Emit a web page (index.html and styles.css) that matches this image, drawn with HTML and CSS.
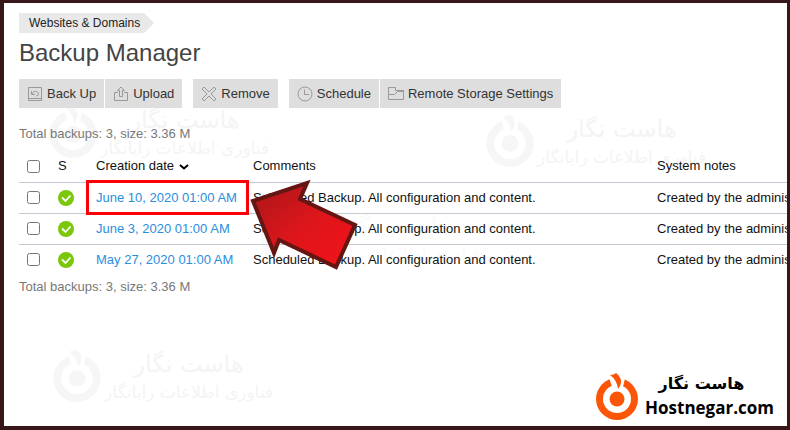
FILE: index.html
```html
<!DOCTYPE html>
<html lang="en">
  <head>
    <meta charset="UTF-8" />
    <title>Backup Manager</title>
    <link rel="stylesheet" href="styles.css">
  </head>
  <body>
    <!-- Shared shapes -->
    <svg class="sprite" aria-hidden="true">
      <symbol id="brand" viewBox="0 0 44 48">
        <circle cx="22" cy="27" r="21"></circle>
        <circle class="hole" cx="22" cy="27" r="14"></circle>
        <path class="hole" d="M13 2L17 15L22 21L28 15L31 2Z"></path>
        <circle cx="22" cy="27" r="7.500"></circle>
        <path d="M15 3Q19 3 21 1Q30 8 23 17Q22 8 15 3Z"></path>
      </symbol>
      <symbol id="ok" viewBox="0 0 16 16">
        <circle cx="8" cy="8" r="8" fill="#7bc70a"></circle>
        <path d="M4 7.500L7.500 11L12.500 5.500" fill="none" stroke="#fff" stroke-width="1.800"></path>
      </symbol>
    </svg>

    <div class="frame">
      <div class="watermark watermark-top-left" aria-hidden="true">
        <svg class="brand-icon"><use href="#brand"></use></svg>
        <div class="watermark-text" dir="rtl" lang="fa">
          <span class="watermark-name">هاست نگار</span>
          <span class="watermark-tagline">فناوری اطلاعات رایانگار</span>
        </div>
      </div>
      <div class="watermark watermark-top-right" aria-hidden="true">
        <svg class="brand-icon"><use href="#brand"></use></svg>
        <div class="watermark-text" dir="rtl" lang="fa">
          <span class="watermark-name">هاست نگار</span>
          <span class="watermark-tagline">فناوری اطلاعات رایانگار</span>
        </div>
      </div>
      <div class="watermark watermark-middle" aria-hidden="true">
        <svg class="brand-icon"><use href="#brand"></use></svg>
        <div class="watermark-text" dir="rtl" lang="fa">
          <span class="watermark-name">هاست نگار</span>
          <span class="watermark-tagline">فناوری اطلاعات رایانگار</span>
        </div>
      </div>
      <div class="watermark watermark-bottom" aria-hidden="true">
        <svg class="brand-icon"><use href="#brand"></use></svg>
        <div class="watermark-text" dir="rtl" lang="fa">
          <span class="watermark-name">هاست نگار</span>
          <span class="watermark-tagline">فناوری اطلاعات رایانگار</span>
        </div>
      </div>

      <main class="content">
        <nav><a class="breadcrumb" href="#">Websites &amp; Domains</a></nav>
        <h1>Backup Manager</h1>

        <div class="toolbar">
          <div class="button-group">
            <button type="button">
              <svg viewBox="0 0 16 16"><path d="M1.500 1.500h13v13h-13zM1 12.500h14M4.500 5v3.500H8M5 8C6.500 4 11.500 5 11.500 8Q11.500 10 9 10"></path></svg>
              Back Up
            </button>
            <button type="button">
              <svg viewBox="0 0 16 16"><path d="M5 6.500H1.500v8h13v-8H11M6.500 10.500V4.500h-2L8 1l3.500 3.500h-2v6z"></path></svg>
              Upload
            </button>
          </div>
          <div class="button-group">
            <button type="button">
              <svg viewBox="0 0 16 16"><path d="M1 3L3 1L8 6L13 1L15 3L10 8L15 13L13 15L8 10L3 15L1 13L6 8Z"></path></svg>
              Remove
            </button>
          </div>
          <div class="button-group">
            <button type="button">
              <svg viewBox="0 0 16 16"><circle cx="8" cy="8" r="7"></circle><path d="M7.500 3.500v5H12"></path></svg>
              Schedule
            </button>
            <button type="button">
              <svg viewBox="0 0 16 16"><path d="M.5 1.500h7v3h8v9H.5zM.5 8.500h6l3-3h6"></path></svg>
              Remote Storage Settings
            </button>
          </div>
        </div>

        <p class="summary">Total backups: 3, size: 3.36 M</p>

        <table class="backups">
          <thead>
            <tr>
              <th class="col-check"><input type="checkbox" aria-label="Select all backups"></th>
              <th class="col-status">S</th>
              <th class="col-date">Creation date <svg class="sort-icon" viewBox="0 0 10 6"><path d="M1 1l4 3.500L9 1"></path></svg></th>
              <th class="col-comments">Comments</th>
              <th>System notes</th>
            </tr>
          </thead>
          <tbody>
            <tr>
              <td><input type="checkbox" aria-label="Select June 10, 2020"></td>
              <td><svg class="status-icon"><use href="#ok"></use></svg></td>
              <td class="marked">
                <a href="#">June 10, 2020 01:00 AM</a>
                <svg class="arrow" viewBox="0 0 110 92" aria-hidden="true">
                  <defs>
                    <linearGradient id="arrowFill" x1="0" y1="0" x2="1" y2="1">
                      <stop offset="0" stop-color="#a8161a"></stop>
                      <stop offset="0.500" stop-color="#dc161b"></stop>
                      <stop offset="1" stop-color="#f51219"></stop>
                    </linearGradient>
                  </defs>
                  <path d="M4 22L58 4L51 20L106 46L87 88L30 61L25 74Z"></path>
                </svg>
              </td>
              <td>Scheduled Backup. All configuration and content.</td>
              <td>Created by the administrator.</td>
            </tr>
            <tr>
              <td><input type="checkbox" aria-label="Select June 3, 2020"></td>
              <td><svg class="status-icon"><use href="#ok"></use></svg></td>
              <td><a href="#">June 3, 2020 01:00 AM</a></td>
              <td>Scheduled Backup. All configuration and content.</td>
              <td>Created by the administrator.</td>
            </tr>
            <tr>
              <td><input type="checkbox" aria-label="Select May 27, 2020"></td>
              <td><svg class="status-icon"><use href="#ok"></use></svg></td>
              <td><a href="#">May 27, 2020 01:00 AM</a></td>
              <td>Scheduled Backup. All configuration and content.</td>
              <td>Created by the administrator.</td>
            </tr>
          </tbody>
        </table>

        <p class="summary">Total backups: 3, size: 3.36 M</p>
      </main>

      <footer class="brand">
        <svg class="brand-icon" aria-hidden="true"><use href="#brand"></use></svg>
        <div class="brand-text">
          <span class="brand-name" dir="rtl" lang="fa">هاست نگار</span>
          <span class="brand-site">Hostnegar.com</span>
        </div>
      </footer>
    </div>
  </body>
</html>
```

FILE: styles.css
```css
:root {
  --frame-color: #371719;
  --text-color: #111111;
  --muted-color: #777777;
  --link-color: #2b8ede;
  --button-color: #dedede;
  --border-color: #c3cad1;
  --brand-color: #fb5607;
}

*,
*::before {
  box-sizing: border-box;
}

body {
  margin: 0;
  font-family: "Liberation Sans", Arial, sans-serif;
  font-size: 13px;
  line-height: 16px;
  color: var(--text-color);
}

.sprite {
  position: absolute;
  width: 0;
  height: 0;
}

.frame {
  position: relative;
  display: flex;
  flex-direction: column;
  min-height: 100vh;
  border: solid var(--frame-color);
  border-width: 3px 3px 4px 4px;
  background-color: #ffffff;
  overflow: hidden;
}

.content {
  position: relative;
  padding: 10px 0 0 15px;
}

.breadcrumb {
  display: inline-block;
  padding: 2px 14px 2px 10px;
  background-color: #e9e9e9;
  clip-path: polygon(0 0, calc(100% - 10px) 0, 100% 50%, calc(100% - 10px) 100%, 0 100%);
  font-size: 12px;
  color: #222222;
  text-decoration: none;
}

nav {
  display: flex;
}

h1 {
  margin: 6px 0 12px;
  font-size: 24px;
  line-height: 28px;
  font-weight: normal;
  color: #444444;
}

/* Toolbar */
.toolbar {
  display: flex;
  gap: 11px;
}

.button-group {
  display: flex;
  gap: 1px;
}

button {
  display: flex;
  align-items: center;
  gap: 4px;
  height: 29px;
  padding: 0 8px;
  border: none;
  background-color: var(--button-color);
  font: inherit;
  color: #333333;
  white-space: nowrap;
}

button svg {
  width: 16px;
  height: 16px;
  fill: none;
  stroke: #999999;
}

.summary {
  margin: 18px 0 9px;
  color: var(--muted-color);
}

/* Backup list */
.backups {
  width: 100%;
  border-collapse: collapse;
  table-layout: fixed;
}

.backups + .summary {
  margin: 4px 0 0;
}

th,
td {
  height: 31px;
  padding: 0;
  text-align: left;
  font-weight: normal;
  white-space: nowrap;
}

tbody td {
  border-top: 1px solid var(--border-color);
}

.col-check {
  width: 39px;
}

.col-status {
  width: 38px;
}

.col-date {
  width: 157px;
}

.col-comments {
  width: 404px;
}

input {
  display: block;
  width: 13px;
  height: 13px;
  margin: 0 8px;
}

.backups a {
  color: var(--link-color);
  text-decoration: none;
}

.status-icon {
  display: block;
  width: 16px;
  height: 16px;
}

.sort-icon {
  width: 10px;
  height: 6px;
  margin-left: 1px;
  fill: none;
  stroke: #000000;
  stroke-width: 2;
}

/* Highlight box and arrow */
.marked {
  position: relative;
}

.marked::before {
  content: "";
  position: absolute;
  top: -3px;
  left: -10px;
  width: 163px;
  height: 35px;
  border: 3px solid #fb0007;
}

.arrow {
  position: absolute;
  z-index: 1;
  top: -4px;
  left: 153px;
  width: 110px;
  height: 92px;
  fill: url(#arrowFill);
  stroke: #651512;
  stroke-width: 4;
}

/* Brand */
.brand {
  display: flex;
  align-items: center;
  gap: 6px;
  margin: auto 13px 6px auto;
  color: #000000;
}

.brand-icon {
  width: 44px;
  height: 48px;
  fill: var(--brand-color);
}

.hole {
  fill: #ffffff;
}

.brand-text {
  display: flex;
  flex-direction: column;
  align-items: center;
}

.brand-name {
  padding-right: 16px;
  font-family: "DejaVu Sans", sans-serif;
  font-size: 16px;
  line-height: 24px;
  font-weight: bold;
}

.brand-site {
  font-family: "Open Sans", "Noto Sans", sans-serif;
  font-size: 17px;
  line-height: 24px;
  font-weight: bold;
}

/* Watermarks */
.watermark {
  position: absolute;
  display: flex;
  gap: 2px;
  color: #f4f4f4;
}

.watermark .brand-icon {
  width: 50px;
  height: 54px;
  fill: #f6f6f6;
}

.watermark-text {
  display: flex;
  flex-direction: column;
  align-items: center;
  font-family: "DejaVu Sans", sans-serif;
  white-space: nowrap;
}

.watermark-name {
  font-size: 24px;
  line-height: 32px;
}

.watermark-tagline {
  font-size: 17px;
  line-height: 24px;
}

.watermark-top-left {
  top: 101px;
  left: 44px;
}

.watermark-top-right {
  top: 110px;
  left: 481px;
}

.watermark-middle {
  top: 207px;
  left: 255px;
  color: #fafafa;
}

.watermark-middle .brand-icon {
  fill: #fafafa;
}

.watermark-bottom {
  top: 345px;
  left: 48px;
}
```
